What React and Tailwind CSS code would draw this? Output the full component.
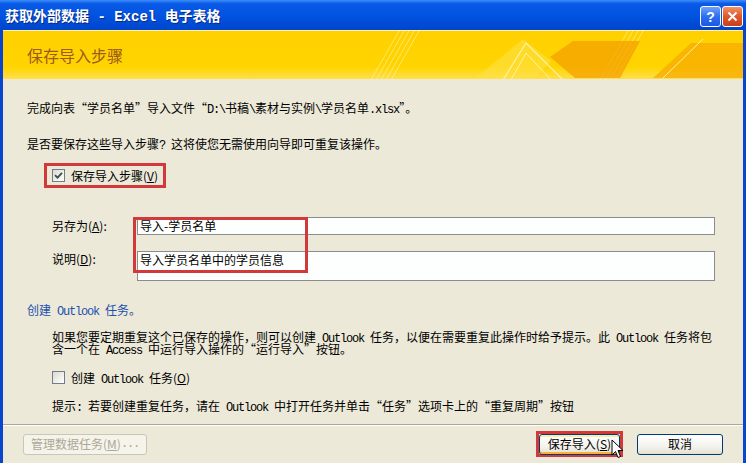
import React from 'react'

// latin runs in the old dialog font are narrow monospace glyphs
const M = ({ children, className = '' }) => (
  <span className={`font-['Liberation_Mono',monospace] tracking-[-1.2px] leading-[0] whitespace-pre ${className}`}>{children}</span>
)

const Check = ({ checked }) => (
  <span className="w-[13px] h-[13px] shrink-0 border border-[#6f7d8c] bg-[linear-gradient(135deg,#dcdad0,#ffffff)] flex items-center justify-center">
    {checked && (
      <svg width="9" height="9" viewBox="0 0 9 9">
        <path d="M1 4.2 L3.5 6.7 L8 1.8" stroke="#3d4f3d" strokeWidth="1.8" fill="none" />
      </svg>
    )}
  </span>
)

const XpButton = ({ children, className = '' }) => (
  <div className={`h-[21px] rounded-[3px] border border-[#003c74] bg-[linear-gradient(180deg,#ffffff_0%,#f4f3ee_60%,#e3e0d2_100%)] flex items-center justify-center leading-[12px] whitespace-nowrap ${className}`}>
    {children}
  </div>
)

const Banner = () => (
  <div className="relative h-[49px] shrink-0 overflow-hidden bg-[linear-gradient(180deg,#ffd000_0%,#ffd400_75%,#ffdf4a_100%)] border-t border-[#fff3b0] flex items-center pl-[24px]">
    <svg className="absolute inset-0" width="740" height="49" viewBox="0 0 740 49">
      <g stroke="#fff6c0" strokeOpacity="0.55" strokeWidth="1">
        <line x1="368" y1="49" x2="396" y2="0" />
        <line x1="373" y1="49" x2="401" y2="0" />
        <line x1="378" y1="49" x2="406" y2="0" />
        <line x1="383" y1="49" x2="411" y2="0" />
        <line x1="388" y1="49" x2="416" y2="0" />
        <line x1="597" y1="49" x2="625" y2="0" />
        <line x1="602" y1="49" x2="630" y2="0" />
        <line x1="607" y1="49" x2="635" y2="0" />
        <line x1="612" y1="49" x2="640" y2="0" />
      </g>
      <polygon points="470,49 520,8 548,30 530,49" fill="#ffe14a" fillOpacity="0.55" />
      <polyline points="500,49 523,12 560,49" stroke="#fff2a0" strokeWidth="1.2" fill="none" />
      <polyline points="508,49 523,22 548,49" stroke="#fff2a0" strokeWidth="1" fill="none" />
      <polygon points="547,26 570,10 637,10 617,47 572,47" fill="#f4a000" fillOpacity="0.75" />
      <polygon points="650,47 688,12 740,12 740,47" fill="#f6a800" fillOpacity="0.7" />
      <polyline points="660,47 700,8" stroke="#fff2a0" strokeWidth="1" fill="none" />
    </svg>
    <span className="relative text-[16px] leading-[16px] text-[#9e5a1a]">保存导入步骤</span>
  </div>
)

export default function App() {
  return (
    <div className="relative w-[746px] h-[463px] overflow-hidden flex flex-col bg-[#0a45cf] font-['Noto_Sans_CJK_SC',sans-serif] text-[12px] text-black">
      {/* title bar */}
      <div className="h-[30px] shrink-0 flex items-start pl-[5px] pr-[3px] bg-[linear-gradient(180deg,#3d8ef6_0%,#0a5ae8_12%,#0052df_55%,#0045cc_100%)]">
        <div className="flex-1 mt-[8px] h-[15px] text-white font-bold text-[14px] leading-[15px] whitespace-nowrap [text-shadow:1px_1px_0_#0b2a86]">
          获取外部数据<M className="tracking-[0px]"> - Excel </M>电子表格
        </div>
        <div className="flex gap-[1px] mt-[6px]">
          <div className="w-[21px] h-[21px] rounded-[3px] border border-white bg-[linear-gradient(180deg,#6fa3f8_0%,#2d6ef2_50%,#1c58e0_100%)] flex items-center justify-center text-white font-bold text-[14px] leading-[14px] font-['Liberation_Sans',sans-serif]">
            ?
          </div>
          <div className="w-[21px] h-[21px] rounded-[3px] border border-white bg-[linear-gradient(180deg,#f0936a_0%,#e0572c_50%,#c8401c_100%)] flex items-center justify-center">
            <svg width="11" height="11" viewBox="0 0 11 11">
              <path d="M1.5 1.5 L9.5 9.5 M9.5 1.5 L1.5 9.5" stroke="#fff" strokeWidth="2" />
            </svg>
          </div>
        </div>
      </div>

      <div className="flex-1 flex px-[3px] min-h-0">
        <div className="flex-1 flex flex-col bg-[#ece9d8] min-w-0">
          <Banner />

          <div className="relative flex-1 flex flex-col">
            <div className="pl-[24px] mt-[23px] h-[12px] leading-[12px] whitespace-nowrap">
              完成向表“学员名单”导入文件“<M>D:\</M>书稿<M>\</M>素材与实例<M>\</M>学员名单<M>.xlsx</M>”。
            </div>
            <div className="pl-[24px] mt-[24px] h-[12px] leading-[12px] whitespace-nowrap">
              是否要保存这些导入步骤<M>? </M>这将使您无需使用向导即可重复该操作。
            </div>
            <div className="ml-[41px] mt-[13px] w-[122px] h-[25px] border-[3px] border-[#d2393b] flex items-center pl-[5px] gap-[6px] leading-[12px]">
              <Check checked />
              <span className="whitespace-nowrap">保存导入步骤(<u>V</u>)</span>
            </div>

            <div className="mt-[29px] h-[18px] flex items-start pl-[49px] pr-[28px]">
              <div className="w-[85px] h-[18px] leading-[18px] whitespace-nowrap">另存为(<u>A</u>):</div>
              <div className="flex-1 h-[18px] border border-[#8a8c8e] bg-[#fdfefe] pl-[2px] leading-[16px] whitespace-nowrap">导入-学员名单</div>
            </div>
            <div className="mt-[16px] h-[30px] flex items-start pl-[49px] pr-[28px]">
              <div className="w-[85px] pt-[2px] leading-[12px] whitespace-nowrap">说明(<u>D</u>):</div>
              <div className="flex-1 h-[30px] border border-[#8a8c8e] bg-[#fdfefe] pl-[2px] pt-[1px] leading-[14px] whitespace-nowrap">导入学员名单中的学员信息</div>
            </div>

            <div className="pl-[24px] mt-[23px] h-[12px] leading-[12px] text-[#2150b0] whitespace-nowrap">
              创建<M> Outlook </M>任务。
            </div>
            <div className="pl-[49px] mt-[15px] leading-[12px] whitespace-nowrap">
              <div className="h-[12px]">如果您要定期重复这个已保存的操作，则可以创建<M> Outlook </M>任务，以便在需要重复此操作时给予提示。此<M> Outlook </M>任务将包</div>
              <div className="h-[12px]">含一个在<M> Access </M>中运行导入操作的“运行导入”按钮。</div>
            </div>
            <div className="pl-[49px] mt-[16px] h-[13px] flex items-center gap-[6px] leading-[13px] whitespace-nowrap">
              <Check />
              <span>创建<M> Outlook </M>任务(<u>O</u>)</span>
            </div>
            <div className="pl-[49px] mt-[16px] h-[12px] leading-[12px] whitespace-nowrap">
              提示<M>: </M>若要创建重复任务，请在<M> Outlook </M>中打开任务并单击“任务”选项卡上的“重复周期”按钮
            </div>

            <div className="mt-[12px] border-t border-b border-t-[#aca899] border-b-white" />

            <div className="mt-[5px] h-[26px] flex items-center pl-[20px] pr-[20px]">
              <div className="w-[124px] h-[21px] rounded-[3px] border border-[#c9c7ba] bg-[#f5f4ea] flex items-center justify-center text-[#aca899] leading-[12px] whitespace-nowrap">
                管理数据任务(<u>M</u>)<M>...</M>
              </div>
              <div className="flex-1" />
              <div className="w-[87px] h-[26px] border-[3px] border-[#d2393b] flex items-center">
                <XpButton className="w-[81px] shadow-[inset_0_-2px_0_#f3b23c,inset_0_2px_0_#ffe9a8]">
                  保存导入(<u>S</u>)
                </XpButton>
              </div>
              <XpButton className="ml-[14px] w-[86px]">取消</XpButton>
            </div>

            {/* annotation box over the name fields */}
            <div className="absolute left-[130px] top-[138px] w-[175px] h-[56px] border-[3px] border-[#d2393b]" />
          </div>
        </div>
      </div>

      {/* mouse pointer */}
      <svg className="absolute left-[611px] top-[439px]" width="13" height="20" viewBox="0 0 13 20">
        <path d="M1 1 L1 16 L4.5 12.5 L7 18.5 L9.5 17.5 L7 11.5 L12 11.5 Z" fill="#fff" stroke="#000" strokeWidth="1" strokeLinejoin="round" />
      </svg>
    </div>
  )
}
